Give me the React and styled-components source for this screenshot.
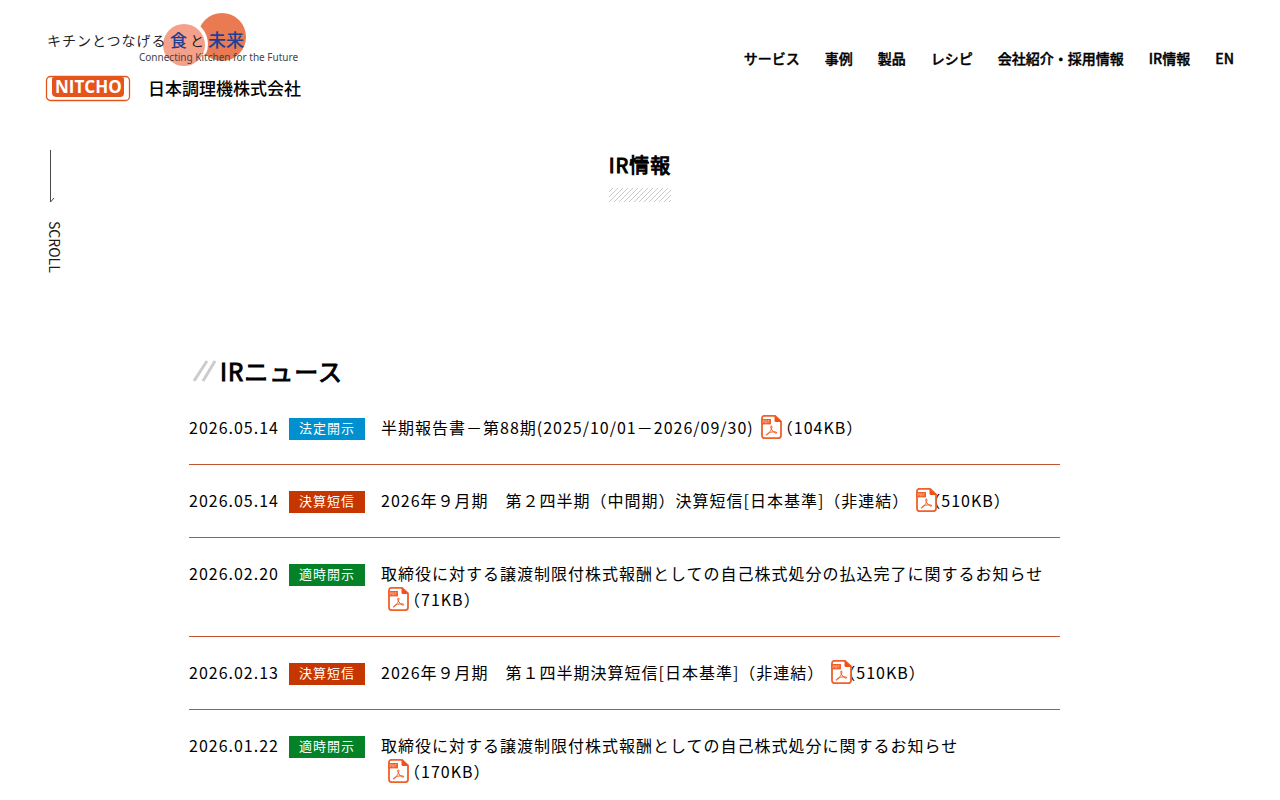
import React from "react";
import styled, { createGlobalStyle } from "styled-components";

const GlobalStyle = createGlobalStyle`
  *, *::before, *::after { box-sizing: border-box; }
  body {
    margin: 0;
    background: #fff;
    color: #000;
    font-family: "Noto Sans CJK JP", sans-serif;
    font-size: 16px;
    line-height: 26px;
    letter-spacing: 1px;
  }
  a { color: inherit; text-decoration: none; }
`;

const Header = styled.header`
  display: flex;
  align-items: center;
  justify-content: space-between;
  padding: 12px 46px 13px 45px;
`;

const LogoLink = styled.a`
  display: block;
  line-height: 0;
`;

const Nav = styled.nav`
  padding-bottom: 2px;

  ul {
    display: flex;
    gap: 25px;
    margin: 0;
    padding: 0;
    list-style: none;
  }
`;

const NavLink = styled.a`
  font-size: 14px;
  font-weight: 500;
  -webkit-text-stroke: 0.4px currentColor;
  line-height: 24px;
  letter-spacing: 0;
`;

const Hero = styled.section`
  display: grid;
  grid-template-columns: 1fr auto 1fr;
  align-items: start;
  padding: 33px 46px 0;
`;

const Scroll = styled.a`
  display: flex;
  flex-direction: column;
  align-items: flex-start;
  gap: 18px;
  justify-self: start;
  color: #221815;
`;

const ScrollLabel = styled.span`
  writing-mode: vertical-rl;
  font-size: 14px;
  line-height: 18px;
  letter-spacing: 0;
`;

const PageTitle = styled.h1`
  margin: 0;
  font-size: 20px;
  font-weight: 400;
  -webkit-text-stroke: 1px currentColor;
  line-height: 30px;
`;

const Hatch = styled.svg`
  display: block;
  width: 0;
  min-width: 100%;
  height: 14px;
  margin-top: 8px;
`;

const Main = styled.main`
  margin: 77px 220px 0 189px;
`;

const SectionTitle = styled.h2`
  display: flex;
  align-items: center;
  gap: 4px;
  margin: 0;
  padding-left: 4px;
  font-size: 24px;
  font-weight: 400;
  -webkit-text-stroke: 1px currentColor;
  line-height: 42px;
`;

const NewsList = styled.ul`
  margin: 0;
  padding: 0;
  list-style: none;
`;

const NewsRow = styled.li`
  display: grid;
  grid-template-columns: 100px 76px 1fr;
  align-items: start;
  padding: 22px 0 24px;
  border-bottom: 1px solid #c1542f;
`;

const badgeColors = {
  法定開示: "#0090d0",
  決算短信: "#c63600",
  適時開示: "#058227",
};

const Badge = styled.span`
  margin-top: 4px;
  padding: 0 0 2px 10px;
  background: ${(p) => badgeColors[p.$kind]};
  color: #fff;
  font-size: 13px;
  line-height: 20px;
`;

const NewsLink = styled.a`
  padding-left: 16px;
`;

const FileSize = styled.span`
  position: relative;
  padding-left: 23px;
`;

const PdfSvg = styled.svg`
  position: absolute;
  left: 7px;
  top: 0;
`;

function PdfIcon() {
  return (
    <PdfSvg width="21" height="24" viewBox="0 0 21 24" role="img" aria-label="PDF">
      <path
        d="M1 9V3.5Q1 .8 3.7 .8H14L20 6.5V20.3Q20 23.2 17.3 23.2H3.7Q1 23.2 1 20.3Z"
        fill="#fff"
        stroke="#f0602a"
        strokeWidth="1.8"
      />
      <path d="M13.5 .8L20.3 7H15Q13.5 7 13.5 5.5Z" fill="#f0501a" />
      <rect x="0" y="4" width="10" height="5.4" fill="#f0602a" />
      <path
        d="M2 8V5.5H3.4V7H2M4.6 5.5V8H5.6V5.5ZM7 8V5.5H8.5M7 6.8H8.2"
        fill="none"
        stroke="#fbb499"
        strokeWidth=".6"
      />
      <path
        d="M10 11Q11 10.6 11 12.3Q10.5 15.5 6.6 19.6Q5.2 20.6 5.1 19.8Q5.3 18.5 9.5 17.3Q13.5 16.2 15.5 17.2Q16.4 18.3 14.8 18.2Q12 17.4 10.3 14Q9.4 11.6 10 11Z"
        fill="none"
        stroke="#f0602a"
        strokeWidth="1"
      />
    </PdfSvg>
  );
}

function Logo() {
  const jp = '"Noto Sans CJK JP", sans-serif';
  return (
    <svg width="260" height="92" viewBox="0 0 260 92" role="img" aria-label="日本調理機株式会社">
      <circle cx="177" cy="25" r="24" fill="#e97a51" />
      <circle cx="139" cy="32" r="24" fill="#fff" />
      <circle cx="139" cy="33" r="21" fill="#f5a08a" />
      <g fontFamily={jp} fill="#222">
        <text x="2" y="34" fontSize="14" letterSpacing="1">キチンとつなげる</text>
        <text x="125" y="35" fontSize="17" fontWeight="500" fill="#1d3f94" letterSpacing="0">食</text>
        <text x="145" y="34" fontSize="14" letterSpacing="0">と</text>
        <text x="163" y="35" fontSize="18" fontWeight="500" fill="#1d3f94" letterSpacing="0">未来</text>
      </g>
      <text x="94" y="49" fontSize="10" fontFamily='"Noto Sans", sans-serif' fill="#444" letterSpacing="0">
        Connecting Kitchen for the Future
      </text>
      <rect x="1.5" y="64.5" width="83" height="24" rx="4" fill="#fff" stroke="#e5551b" strokeWidth="1.3" />
      <path d="M9 65H77Q79 65 79 67V81Q79 85 75 85H12Q7 85 7 81V67Q7 65 9 65Z" fill="#e5551b" />
      <text x="10" y="81" fontSize="17" fontWeight="700" fontFamily='"Open Sans", sans-serif' fill="#fff" letterSpacing="0">
        NITCHO
      </text>
      <text x="103" y="83" fontSize="17" fontWeight="500" fontFamily={jp} fill="#000" letterSpacing="0">
        日本調理機株式会社
      </text>
    </svg>
  );
}

const navItems = ["サービス", "事例", "製品", "レシピ", "会社紹介・採用情報", "IR情報", "EN"];

const news = [
  { date: "2026.05.14", kind: "法定開示", title: "半期報告書－第88期(2025/10/01－2026/09/30)", size: "104KB" },
  { date: "2026.05.14", kind: "決算短信", title: "2026年９月期　第２四半期（中間期）決算短信[日本基準]（非連結）", size: "510KB" },
  { date: "2026.02.20", kind: "適時開示", title: "取締役に対する譲渡制限付株式報酬としての自己株式処分の払込完了に関するお知らせ", size: "71KB" },
  { date: "2026.02.13", kind: "決算短信", title: "2026年９月期　第１四半期決算短信[日本基準]（非連結）", size: "510KB" },
  { date: "2026.01.22", kind: "適時開示", title: "取締役に対する譲渡制限付株式報酬としての自己株式処分に関するお知らせ", size: "170KB" },
];

export default function App() {
  return (
    <>
      <GlobalStyle />
      <Header>
        <LogoLink href="#top">
          <Logo />
        </LogoLink>
        <Nav>
          <ul>
            {navItems.map((item) => (
              <li key={item}>
                <NavLink href="#menu">{item}</NavLink>
              </li>
            ))}
          </ul>
        </Nav>
      </Header>
      <Hero>
        <Scroll href="#news">
          <svg width="10" height="53" viewBox="0 0 10 53" fill="none" stroke="#333" aria-hidden="true">
            <path d="M4.5 0V52L8 48" strokeWidth=".9" />
          </svg>
          <ScrollLabel>SCROLL</ScrollLabel>
        </Scroll>
        <PageTitle>
          IR情報
          <Hatch aria-hidden="true">
            <defs>
              <pattern id="hatch" width="5" height="14" patternUnits="userSpaceOnUse">
                <path d="M-15 14L-1 0M-10 14L4 0M-5 14L9 0M0 14L14 0" stroke="#bbb" strokeWidth=".8" />
              </pattern>
            </defs>
            <rect width="100%" height="14" fill="url(#hatch)" />
          </Hatch>
        </PageTitle>
      </Hero>
      <Main id="news">
        <SectionTitle>
          <svg width="23" height="22" viewBox="0 0 23 22" stroke="#ccc" strokeWidth="3" aria-hidden="true">
            <path d="M1 21L14 1M10 21L22 1" />
          </svg>
          IRニュース
        </SectionTitle>
        <NewsList>
          {news.map((n) => (
            <NewsRow key={n.date + n.title}>
              <time>{n.date}</time>
              <Badge $kind={n.kind}>{n.kind}</Badge>
              <NewsLink href="#pdf">
                {n.title}
                <FileSize>
                  （{n.size}）
                  <PdfIcon />
                </FileSize>
              </NewsLink>
            </NewsRow>
          ))}
        </NewsList>
      </Main>
    </>
  );
}
